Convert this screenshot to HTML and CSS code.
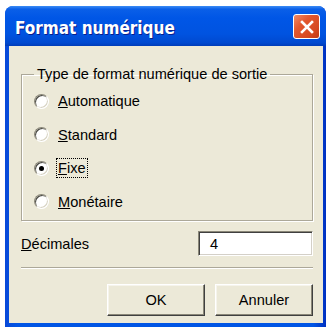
FILE: index.html
```html
<!DOCTYPE html>
<html lang="fr">

<head>
	<meta charset="UTF-8">
	<title>Format numérique</title>
	<link rel="stylesheet" href="styles.css">
</head>

<body>
	<div class="window">
		<div class="titlebar">
			<span class="title">Format numérique</span>
			<button class="close" aria-label="Fermer">
				<svg width="16" height="16" viewBox="0 0 16 16">
					<path d="M3 3 L13 13 M13 3 L3 13" stroke="#fff" stroke-width="2.6" stroke-linecap="square" fill="none"/>
				</svg>
			</button>
		</div>

		<div class="client">
			<fieldset class="group">
				<legend>Type de format numérique de sortie</legend>
				<label class="radio"><span class="dot"></span><span><u>A</u>utomatique</span></label>
				<label class="radio"><span class="dot"></span><span><u>S</u>tandard</span></label>
				<label class="radio checked"><span class="dot"></span><span class="focus"><u>F</u>ixe</span></label>
				<label class="radio"><span class="dot"></span><span><u>M</u>onétaire</span></label>
			</fieldset>

			<div class="field">
				<span><u>D</u>écimales</span>
				<div class="input">4</div>
			</div>

			<div class="separator"></div>

			<div class="buttons">
				<button class="btn">OK</button>
				<button class="btn">Annuler</button>
			</div>
		</div>
	</div>
</body>

</html>
```

FILE: styles.css
```css
body {
	margin: 0;
	background-color: #fff;
	font-family: 'Liberation Sans', Arial, sans-serif;
	font-size: 14.6px;
	color: #000;
}

.window {
	margin: 6px 0 0 5px;
	width: 321px;
	height: 321px;
	box-sizing: border-box;
	padding: 0 3px 4px 4px;
	border-radius: 8px 8px 0 0;
	background: linear-gradient(to right, #0848d8 0%, #0055e5 4%, #0055e5 96%, #0030c0 100%);
	display: flex;
	flex-direction: column;
}

.titlebar {
	height: 40px;
	margin: 0 -3px 0 -4px;
	padding: 0 6px 0 10px;
	border-radius: 8px 8px 0 0;
	background: linear-gradient(to bottom, #3b8cf5 0%, #0a5fe8 8%, #0056e6 30%, #0053e0 70%, #0049d0 92%, #003cb8 100%);
	display: flex;
	align-items: center;
	justify-content: space-between;
}

.title {
	padding-top: 3px;
	color: #fff;
	font-family: 'DejaVu Sans Condensed', 'DejaVu Sans', sans-serif;
	font-weight: bold;
	font-size: 17px;
	text-shadow: 1px 1px 0 #0a1e8c;
}

.close {
	width: 27px;
	height: 25px;
	margin-top: 1px;
	padding: 0;
	border: 1px solid #fff;
	border-radius: 3px;
	background: linear-gradient(135deg, #f08a66 0%, #e2582f 35%, #d64820 75%, #c03a16 100%);
	display: flex;
	align-items: center;
	justify-content: center;
}

.client {
	flex: 1;
	background-color: #ece9d8;
	padding: 20px 10px 0 12px;
	display: flex;
	flex-direction: column;
}

.group {
	margin: 0;
	height: 155px;
	box-sizing: border-box;
	padding: 10px 0 0 12px;
	border: 1px solid #aca899;
	box-shadow: inset 1px 1px 0 #fff, 1px 1px 0 #fff;
	display: flex;
	flex-direction: column;
	gap: 15.5px;
}

.group legend {
	padding: 0 3px;
}

.radio {
	display: flex;
	align-items: center;
	gap: 9px;
	height: 18px;
}

.dot {
	width: 13px;
	height: 13px;
	border-radius: 50%;
	border: 1px solid;
	border-color: #8a8778 #fff #fff #8a8778;
	background-color: #fff;
	box-shadow: inset 1px 1px 0 #4a4a44, inset -1px -1px 0 #d8d4c4;
	display: flex;
	align-items: center;
	justify-content: center;
}

.checked .dot::after {
	content: '';
	width: 5px;
	height: 5px;
	border-radius: 50%;
	background-color: #000;
}

.focus {
	outline: 1px dotted #000;
	outline-offset: 1px;
}

.field {
	margin-top: 10px;
	display: flex;
	align-items: center;
	justify-content: space-between;
	height: 25px;
}

.input {
	width: 115px;
	height: 25px;
	box-sizing: border-box;
	padding: 4px 0 0 11px;
	background-color: #fff;
	border: 1px solid;
	border-color: #8a8778 #fff #fff #8a8778;
	box-shadow: inset 1px 1px 0 #404040, inset -1px -1px 0 #d4d0c8;
}

.separator {
	margin: 11px 0 0 0;
	height: 1px;
	background-color: #aca899;
	border-bottom: 1px solid #fff;
}

.buttons {
	margin-top: 15px;
	display: flex;
	justify-content: flex-end;
	gap: 10px;
}

.btn {
	width: 98px;
	height: 32px;
	font-family: inherit;
	font-size: 14.6px;
	background-color: #ece9d8;
	border: 1px solid;
	border-color: #fff #404040 #404040 #fff;
	box-shadow: inset -1px -1px 0 #8a8778, inset 1px 1px 0 #f6f4ec;
	padding: 0;
}
```
